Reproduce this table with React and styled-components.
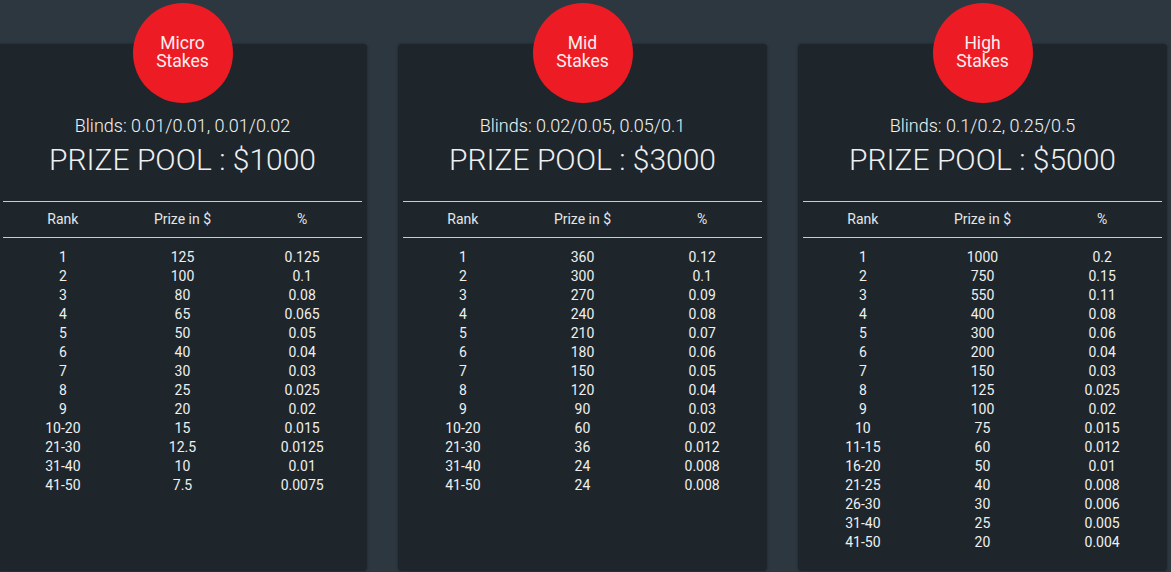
import React from 'react';
import styled, { createGlobalStyle } from 'styled-components';

const GlobalStyle = createGlobalStyle`
  html, body {
    margin: 0;
    padding: 0;
    background: #2c3740;
    font-family: Roboto, "Liberation Sans", sans-serif;
    color: #eef0f0;
  }
`;

const Page = styled.div`
  display: grid;
  grid-template-columns: repeat(3, 369px);
  grid-template-rows: 527px;
  column-gap: 31px;
  margin-left: -2px;
  padding-top: 44px;
  height: 572px;
  box-sizing: border-box;
  overflow: hidden;
`;

const Card = styled.section`
  background: #1e262c;
  border-radius: 4px;
  box-shadow: 0 0 3px rgba(0, 0, 0, 0.35);
  display: flex;
  flex-direction: column;
  align-items: center;
  padding: 0 5px 20px;
  box-sizing: border-box;

  & > * {
    flex-shrink: 0;
  }
`;

const Badge = styled.div`
  width: 100px;
  height: 100px;
  margin-top: -41px;
  border-radius: 50%;
  background: #ed1c24;
  display: flex;
  align-items: center;
  justify-content: center;
  text-align: center;
  font-size: 17.5px;
  line-height: 18px;
  padding-bottom: 2px;
  box-sizing: border-box;
  color: #fdeeee;
`;

const Blinds = styled.div`
  margin-top: 13px;
  font-size: 18px;
  font-weight: 300;
  line-height: 20px;
  color: #f2f4f4;
`;

const Pool = styled.div`
  margin-top: 6px;
  font-size: 30px;
  font-weight: 300;
  line-height: 36px;
`;

const Table = styled.div`
  width: 100%;
  margin-top: 23px;
`;

const Row = styled.div`
  display: grid;
  grid-template-columns: repeat(3, 1fr);
  text-align: center;
  font-size: 14px;
  line-height: 19px;
`;

const HeadRow = styled(Row)`
  border-top: 1px solid #c9cdd0;
  border-bottom: 1px solid #c9cdd0;
  padding: 8px 0;
  color: #e4e6e8;
`;

const Body = styled.div`
  padding-top: 10px;
`;

const stakes = [
  {
    name: ['Micro', 'Stakes'],
    blinds: '0.01/0.01, 0.01/0.02',
    pool: 1000,
    rows: [
      ['1', '125', '0.125'], ['2', '100', '0.1'], ['3', '80', '0.08'], ['4', '65', '0.065'],
      ['5', '50', '0.05'], ['6', '40', '0.04'], ['7', '30', '0.03'], ['8', '25', '0.025'],
      ['9', '20', '0.02'], ['10-20', '15', '0.015'], ['21-30', '12.5', '0.0125'],
      ['31-40', '10', '0.01'], ['41-50', '7.5', '0.0075'],
    ],
  },
  {
    name: ['Mid', 'Stakes'],
    blinds: '0.02/0.05, 0.05/0.1',
    pool: 3000,
    rows: [
      ['1', '360', '0.12'], ['2', '300', '0.1'], ['3', '270', '0.09'], ['4', '240', '0.08'],
      ['5', '210', '0.07'], ['6', '180', '0.06'], ['7', '150', '0.05'], ['8', '120', '0.04'],
      ['9', '90', '0.03'], ['10-20', '60', '0.02'], ['21-30', '36', '0.012'],
      ['31-40', '24', '0.008'], ['41-50', '24', '0.008'],
    ],
  },
  {
    name: ['High', 'Stakes'],
    blinds: '0.1/0.2, 0.25/0.5',
    pool: 5000,
    rows: [
      ['1', '1000', '0.2'], ['2', '750', '0.15'], ['3', '550', '0.11'], ['4', '400', '0.08'],
      ['5', '300', '0.06'], ['6', '200', '0.04'], ['7', '150', '0.03'], ['8', '125', '0.025'],
      ['9', '100', '0.02'], ['10', '75', '0.015'], ['11-15', '60', '0.012'],
      ['16-20', '50', '0.01'], ['21-25', '40', '0.008'], ['26-30', '30', '0.006'],
      ['31-40', '25', '0.005'], ['41-50', '20', '0.004'],
    ],
  },
];

const StakeCard = ({ name, blinds, pool, rows }) => (
  <Card>
    <Badge>{name[0]}<br />{name[1]}</Badge>
    <Blinds>Blinds: {blinds}</Blinds>
    <Pool>PRIZE POOL : ${pool}</Pool>
    <Table>
      <HeadRow>
        <span>Rank</span>
        <span>Prize in $</span>
        <span>%</span>
      </HeadRow>
      <Body>
        {rows.map((r) => (
          <Row key={r[0]}>
            <span>{r[0]}</span>
            <span>{r[1]}</span>
            <span>{r[2]}</span>
          </Row>
        ))}
      </Body>
    </Table>
  </Card>
);

const App = () => (
  <>
    <GlobalStyle />
    <Page>
      {stakes.map((s) => <StakeCard key={s.pool} {...s} />)}
    </Page>
  </>
);

export default App;
